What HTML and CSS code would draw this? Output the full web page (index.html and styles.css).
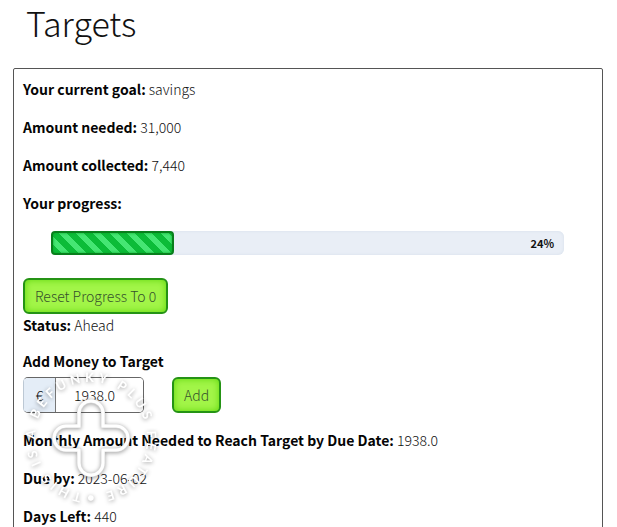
FILE: index.html
```html
<!DOCTYPE html>
<html lang="en">
<head>
<meta charset="utf-8">
<meta name="viewport" content="width=device-width, initial-scale=1">
<title>Targets</title>
<link rel="stylesheet" href="styles.css">
</head>
<body>
<main class="page">
  <h1 class="title">Targets</h1>
  <section class="card">
    <p class="row"><strong>Your current goal:</strong> savings</p>
    <p class="row"><strong>Amount needed:</strong> 31,000</p>
    <p class="row"><strong>Amount collected:</strong> 7,440</p>
    <p class="row"><strong>Your progress:</strong></p>
    <div class="progress" role="progressbar" aria-label="Your progress" aria-valuenow="24" aria-valuemin="0" aria-valuemax="100">
      <div class="bar" style="width: 24%"></div>
      <span class="percent">24%</span>
    </div>
    <button class="button" type="button">Reset Progress To 0</button>
    <p class="row status"><strong>Status:</strong> Ahead</p>
    <form class="form">
      <label class="label" for="amount">Add Money to Target</label>
      <div class="controls">
        <div class="group">
          <span class="currency">€</span>
          <input class="amount" id="amount" type="text" value="1938.0">
        </div>
        <button class="button" type="button">Add</button>
      </div>
    </form>
    <p class="row"><strong>Monthly Amount Needed to Reach Target by Due Date:</strong> 1938.0</p>
    <p class="row"><strong>Due by:</strong> 2023-06-02</p>
    <p class="row"><strong>Days Left:</strong> 440</p>
    <svg class="stamp" width="140" height="140" viewBox="0 0 140 140" aria-hidden="true">
      <path id="ring" fill="none" d="M70 126a56 56 0 0 1 0-112a56 56 0 0 1 0 112a56 56 0 0 1-56-56"/>
      <path class="cross-shade" d="M58 58V45a12 12 0 0 1 24 0v13h13a12 12 0 0 1 0 24H82v13a12 12 0 0 1-24 0V82H45a12 12 0 0 1 0-24z"/>
      <path class="cross" d="M58 58V45a12 12 0 0 1 24 0v13h13a12 12 0 0 1 0 24H82v13a12 12 0 0 1-24 0V82H45a12 12 0 0 1 0-24z"/>
      <text class="stamp-text"><textPath href="#ring" startOffset="9">THIS IS A BEFUNKY PLUS FEATURE •</textPath></text>
    </svg>
  </section>
</main>
</body>
</html>
```

FILE: styles.css
```css
* {
  box-sizing: border-box;
}

html {
  overflow: hidden;
}

body {
  margin: 0;
  background: #fff;
  color: #111;
  font: 300 14px/20px "Noto Sans CJK SC", "Noto Sans", sans-serif;
}

.page {
  padding: 0 14px 0 13px;
}

.title {
  margin: 0;
  padding: 0 13px 22px;
  font-size: 34px;
  font-weight: 300;
  line-height: 46px;
}

.card {
  position: relative;
  padding: 10px 9px 0;
  border: 1px solid #555;
  border-radius: 2px;
}

.row {
  margin: 0 0 18px;
}

strong,
.label {
  color: #050505;
  font-weight: 700;
}

.progress {
  display: flex;
  align-items: center;
  justify-content: space-between;
  height: 24px;
  margin: 0 29px 23px 28px;
  border-radius: 6px;
  background: #e9eef6;
  box-shadow: inset 0 0 3px #d5deea;
}

.bar {
  height: 100%;
  border: 2px solid #087f1c;
  border-radius: 4px;
  background: repeating-linear-gradient(45deg, #0cbc38 0 6px, #45e673 6px 12px);
  box-shadow: inset 0 0 3px #05a825;
}

.percent {
  padding-right: 10px;
  font-size: 11px;
  font-weight: 700;
}

.button {
  display: block;
  padding: 6px 10px;
  border: 2px solid #259315;
  border-radius: 6px;
  background: #a2f548;
  box-shadow: inset 0 0 7px #5fd80c;
  color: #36522c;
  font: inherit;
}

.status {
  margin: 1px 0 16px;
}

.label {
  display: block;
  margin-bottom: 6px;
}

.controls {
  display: flex;
  gap: 28px;
  margin-bottom: 17px;
}

.group {
  display: flex;
  width: 121px;
  border: 1px solid #666;
  border-left-color: #bcc8d4;
  border-radius: 5px;
  overflow: hidden;
}

.currency {
  display: grid;
  place-items: center;
  width: 32px;
  border-right: 1px solid #777;
  background: #e4edf7;
}

.amount {
  flex: 1;
  min-width: 0;
  padding: 0 10px 0 0;
  border: 0;
  background: #fff;
  color: inherit;
  font: inherit;
  text-align: center;
}

.stamp {
  position: absolute;
  top: 299px;
  left: 7px;
  pointer-events: none;
  filter: drop-shadow(0 1px 2px rgb(0 0 0 / 40%));
}

.cross,
.cross-shade {
  fill: none;
  stroke: #fff;
  stroke-width: 3;
}

.cross-shade {
  stroke: #ddd;
  stroke-width: 4;
}

.stamp-text {
  fill: #fff;
  font: 700 13px "Lato", sans-serif;
  letter-spacing: 4px;
}
```
